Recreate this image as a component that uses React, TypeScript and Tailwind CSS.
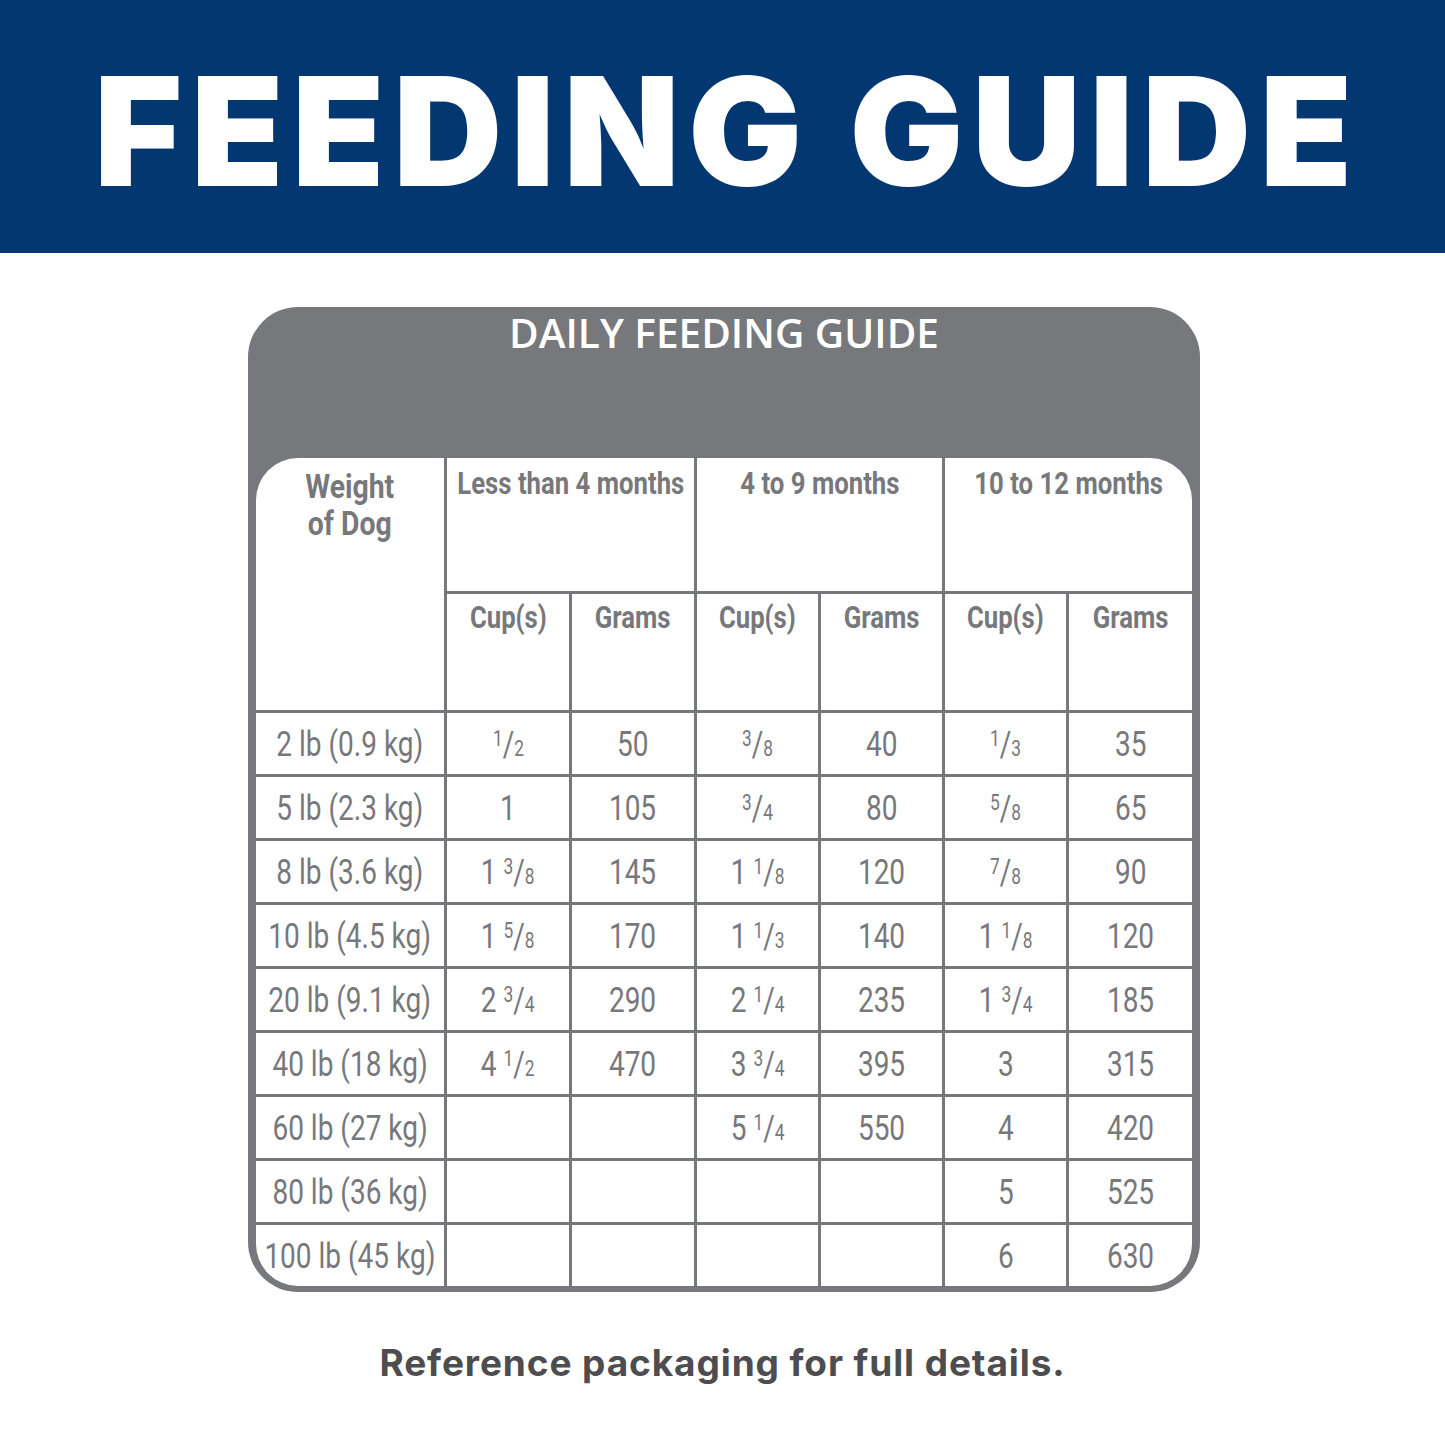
const rows: string[][] = [
  ['2 lb (0.9 kg)', '1/2', '50', '3/8', '40', '1/3', '35'],
  ['5 lb (2.3 kg)', '1', '105', '3/4', '80', '5/8', '65'],
  ['8 lb (3.6 kg)', '1 3/8', '145', '1 1/8', '120', '7/8', '90'],
  ['10 lb (4.5 kg)', '1 5/8', '170', '1 1/3', '140', '1 1/8', '120'],
  ['20 lb (9.1 kg)', '2 3/4', '290', '2 1/4', '235', '1 3/4', '185'],
  ['40 lb (18 kg)', '4 1/2', '470', '3 3/4', '395', '3', '315'],
  ['60 lb (27 kg)', '', '', '5 1/4', '550', '4', '420'],
  ['80 lb (36 kg)', '', '', '', '', '5', '525'],
  ['100 lb (45 kg)', '', '', '', '', '6', '630'],
]

const periods = ['Less than 4 months', '4 to 9 months', '10 to 12 months']

const Amount = ({ value }: { value: string }) => {
  const parts = value.split(' ')
  return (
    <>
      {parts.map((p, i) => {
        const [n, d] = p.split('/')
        return (
          <span key={i}>
            {i > 0 && ' '}
            {d ? (
              <>
                <span className="text-[0.62em] align-[10px]">{n}</span>/<span className="text-[0.62em]">{d}</span>
              </>
            ) : (
              n
            )}
          </span>
        )
      })}
    </>
  )
}

const HeadLabel = ({ children }: { children: React.ReactNode }) => (
  <span className="inline-block shrink-0 scale-x-[0.83] whitespace-nowrap">{children}</span>
)

export default function App() {
  return (
    <div className="w-[1445px] h-[1446px] bg-white font-['Roboto',sans-serif]">
      <div className="h-[253px] bg-[#023771] pt-[56px] pl-[10px] text-center">
        <h1 className="text-white text-[151px] leading-none tracking-[8.6px] font-black font-['Inter',sans-serif]">FEEDING GUIDE</h1>
      </div>

      <div className="pt-[54px]">
        <div className="ml-[248px] w-[952px] rounded-[50px] bg-[#77787c] px-2 pb-[6px]">
          <div className="h-[151px] pt-[6px] text-center text-white text-[40.5px] leading-none font-semibold font-['Open_Sans',sans-serif]">
            DAILY FEEDING GUIDE
          </div>

          <div className="grid grid-cols-[188px_122px_122px_121px_121px_121px_minmax(0,1fr)] grid-rows-[133px_116px_repeat(9,61px)] gap-[3px] rounded-[42px] overflow-hidden text-[#77787c]">
            <div className="row-span-2 bg-white pt-[10px] text-center text-[33px] leading-[37px] font-bold">
              <span className="inline-block scale-x-[0.86] whitespace-nowrap">Weight</span>
              <br />
              <span className="inline-block scale-x-[0.86] whitespace-nowrap">of Dog</span>
            </div>
            {periods.map((p) => (
              <div key={p} className="col-span-2 bg-white pt-[7px] flex justify-center items-start text-[31px] leading-[37px] font-bold">
                <HeadLabel>{p}</HeadLabel>
              </div>
            ))}
            {periods.flatMap((p) =>
              ['Cup(s)', 'Grams'].map((h) => (
                <div key={p + h} className="bg-white pt-[5px] flex justify-center items-start text-[31px] leading-[37px] font-bold">
                  <HeadLabel>{h}</HeadLabel>
                </div>
              ))
            )}

            {rows.flatMap((row, r) =>
              row.map((cell, c) => (
                <div key={r + '-' + c} className="bg-white flex items-center justify-center pt-[4px] text-[35px] font-normal">
                  <span className="inline-block shrink-0 scale-x-[0.8] whitespace-nowrap">
                    {c === 0 ? cell : <Amount value={cell} />}
                  </span>
                </div>
              ))
            )}
          </div>
        </div>
      </div>

      <p className="mt-[52px] text-center text-[37px] leading-none tracking-[0.9px] font-bold text-[#4d4d4f] font-['Inter',sans-serif]">
        Reference packaging for full details.
      </p>
    </div>
  )
}
